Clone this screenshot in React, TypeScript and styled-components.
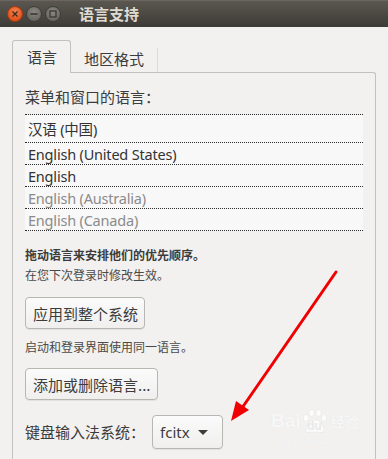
import React from "react";
import styled, { createGlobalStyle } from "styled-components";

const Global = createGlobalStyle`
  html, body { margin: 0; padding: 0; }
  body {
    width: 388px; height: 459px; overflow: hidden;
    background: #f2f1f0;
    font-family: "Noto Sans", "Noto Sans CJK SC", sans-serif;
    color: #3c3c3c;
  }
`;

const Window = styled.div`
  position: relative;
  width: 388px;
  height: 459px;
  background: #f2f1f0;
  overflow: hidden;
`;

const TitleBar = styled.div`
  height: 27px;
  display: flex;
  align-items: center;
  padding-left: 7px;
  background: linear-gradient(#5b5750 0%, #4f4c46 40%, #3d3b37 100%);
  border-top: 1px solid #6a665f;
  box-sizing: border-box;
`;

const WinBtn = styled.div<{ $close?: boolean }>`
  width: 16px;
  height: 16px;
  border-radius: 50%;
  box-sizing: border-box;
  margin-right: 3px;
  display: flex;
  align-items: center;
  justify-content: center;
  background: ${(p) =>
    p.$close
      ? "radial-gradient(circle at 50% 35%, #f4834f, #e0541c 70%, #c84311)"
      : "radial-gradient(circle at 50% 35%, #8a8680, #6c6964 70%, #5a5853)"};
  border: 1px solid ${(p) => (p.$close ? "#a8380f" : "#3f3d39")};
`;

const Title = styled.div`
  margin-left: 15px;
  font-family: "Noto Sans CJK SC", sans-serif;
  font-size: 15px;
  font-weight: 700;
  color: #dfdbd2;
  line-height: 20px;
`;

const Body = styled.div`
  padding: 13px 12px 0 12px;
`;

const Tabs = styled.div`
  display: flex;
  align-items: flex-start;
  height: 32px;
  position: relative;
  z-index: 1;
`;

const Tab = styled.div<{ $active?: boolean }>`
  box-sizing: border-box;
  font-family: "Noto Sans CJK SC", sans-serif;
  font-size: 15px;
  line-height: 20px;
  color: #3c3c3c;
  background: #f2f1f0;
  ${(p) =>
    p.$active
      ? `
    height: 33px;
    padding: 6px 13px 0 14px;
    border: 1px solid #c3c1bc;
    border-bottom: none;
    border-radius: 3px 3px 0 0;
  `
      : `
    height: 24px;
    margin-top: 8px;
    padding: 1px 13px 0 13px;
    border-right: 1px solid #dedcd8;
  `}
`;

const Frame = styled.div`
  box-sizing: border-box;
  border: 1px solid #c3c1bc;
  border-bottom: none;
  border-radius: 0 3px 0 0;
  height: 400px;
  padding: 14px 12px 0 12px;
`;

const Label = styled.div`
  font-family: "Noto Sans CJK SC", sans-serif;
  font-size: 15px;
  line-height: 20px;
  color: #3c3c3c;
`;

const List = styled.div`
  margin-top: 7px;
  border-top: 1px dotted #2a2a2a;
`;

const Row = styled.div<{ $muted?: boolean; $tall?: boolean }>`
  height: ${(p) => (p.$tall ? "27px" : "21px")};
  display: flex;
  align-items: center;
  padding-left: 3px;
  background: #f8f8f8;
  border-bottom: 1px dotted #2a2a2a;
  font-family: "Noto Sans", "Noto Sans CJK SC", sans-serif;
  font-size: 14.5px;
  color: ${(p) => (p.$muted ? "#8b8b8b" : "#333333")};
  letter-spacing: -0.2px;
`;

const Hint = styled.div<{ $bold?: boolean; $gap?: number }>`
  margin-top: ${(p) => p.$gap ?? 0}px;
  font-family: "Noto Sans CJK SC", sans-serif;
  font-size: 12px;
  line-height: 20px;
  font-weight: ${(p) => (p.$bold ? 700 : 400)};
  color: ${(p) => (p.$bold ? "#3c3c3c" : "#4a4a4a")};
`;

const Button = styled.div<{ $gap?: number }>`
  display: inline-flex;
  align-items: center;
  box-sizing: border-box;
  margin-top: ${(p) => p.$gap ?? 0}px;
  height: 32px;
  padding: 0 6px 0 7px;
  border: 1px solid #b8b6b1;
  border-radius: 4px;
  background: linear-gradient(#fbfbfb, #f0efee);
  box-shadow: 0 1px 0 rgba(0, 0, 0, 0.06);
  font-family: "Noto Sans CJK SC", sans-serif;
  font-size: 15px;
  color: #3c3c3c;
`;

const KbdRow = styled.div`
  margin-top: 15px;
  display: flex;
  align-items: center;
`;

const Combo = styled.div`
  margin-left: 7px;
  display: inline-flex;
  align-items: center;
  box-sizing: border-box;
  height: 34px;
  padding: 0 14px 0 7px;
  border: 1px solid #b8b6b1;
  border-radius: 4px;
  background: linear-gradient(#fbfbfb, #f0efee);
  box-shadow: 0 1px 0 rgba(0, 0, 0, 0.06);
  font-family: "Noto Sans", sans-serif;
  font-size: 15px;
  color: #3c3c3c;
`;

const Caret = styled.span`
  margin-left: 8px;
  width: 0;
  height: 0;
  border-left: 5px solid transparent;
  border-right: 5px solid transparent;
  border-top: 5px solid #3c3c3c;
`;

const Overlay = styled.svg`
  position: absolute;
  left: 0;
  top: 0;
  pointer-events: none;
`;

const Watermark = styled.div`
  position: absolute;
  left: 271px;
  top: 409px;
  display: flex;
  flex-direction: column;
  align-items: flex-start;
  color: rgba(255, 255, 255, 0.75);
  text-shadow: 0 0 1px rgba(0, 0, 0, 0.08);
  pointer-events: none;
`;

const WmTop = styled.div`
  display: flex;
  align-items: center;
  font-family: "Liberation Sans", sans-serif;
  font-weight: 700;
  font-size: 19px;
  line-height: 24px;
`;

const Paw = styled.span`
  position: relative;
  display: inline-flex;
  align-items: flex-end;
  justify-content: center;
  width: 26px;
  height: 24px;
  margin: 0 1px;
`;

const PawText = styled.span`
  position: relative;
  font-size: 12px;
  line-height: 14px;
  color: rgba(235, 235, 235, 0.8);
`;

const WmCn = styled.span`
  font-family: "Noto Sans CJK SC", sans-serif;
  font-size: 14px;
  margin-left: 2px;
`;

const WmUrl = styled.div`
  font-family: "Liberation Sans", sans-serif;
  font-size: 9px;
  line-height: 11px;
  margin-top: 2px;
  letter-spacing: 0.4px;
`;

export default function App() {
  const paw = "rgba(255,255,255,0.8)";
  const edge = "rgba(0,0,0,0.07)";
  return (
    <Window>
      <Global />
      <TitleBar>
        <WinBtn $close>
          <svg width="8" height="8" viewBox="0 0 8 8">
            <path d="M1.5 1.5 L6.5 6.5 M6.5 1.5 L1.5 6.5" stroke="#3c2a22" strokeWidth="1.4" />
          </svg>
        </WinBtn>
        <WinBtn>
          <svg width="10" height="10" viewBox="0 0 10 10">
            <path d="M1.5 5 H8.5" stroke="#3a3935" strokeWidth="1.6" />
          </svg>
        </WinBtn>
        <WinBtn>
          <svg width="10" height="10" viewBox="0 0 10 10">
            <rect x="2" y="2" width="6" height="6" fill="none" stroke="#3a3935" strokeWidth="1.3" />
          </svg>
        </WinBtn>
        <Title>语言支持</Title>
      </TitleBar>
      <Body>
        <Tabs>
          <Tab $active>语言</Tab>
          <Tab>地区格式</Tab>
        </Tabs>
        <Frame>
          <Label>菜单和窗口的语言：</Label>
          <List>
            <Row $tall>汉语 (中国)</Row>
            <Row>English (United States)</Row>
            <Row>English</Row>
            <Row $muted>English (Australia)</Row>
            <Row $muted>English (Canada)</Row>
          </List>
          <Hint $bold $gap={14}>拖动语言来安排他们的优先顺序。</Hint>
          <Hint>在您下次登录时修改生效。</Hint>
          <div>
            <Button $gap={12}>应用到整个系统</Button>
          </div>
          <Hint $gap={8}>启动和登录界面使用同一语言。</Hint>
          <div>
            <Button $gap={11}>添加或删除语言...</Button>
          </div>
          <KbdRow>
            <Label>键盘输入法系统：</Label>
            <Combo>
              fcitx
              <Caret />
            </Combo>
          </KbdRow>
        </Frame>
      </Body>
      <Watermark>
        <WmTop>
          Bai
          <Paw>
            <svg width="26" height="24" viewBox="0 0 26 24" style={{ position: "absolute", left: 0, top: 0 }}>
              <ellipse cx="4" cy="9" rx="2.6" ry="3.4" fill={paw} stroke={edge} strokeWidth="0.6" />
              <ellipse cx="9.5" cy="4" rx="2.6" ry="3.2" fill={paw} stroke={edge} strokeWidth="0.6" />
              <ellipse cx="16.5" cy="4" rx="2.6" ry="3.2" fill={paw} stroke={edge} strokeWidth="0.6" />
              <ellipse cx="22" cy="9" rx="2.6" ry="3.4" fill={paw} stroke={edge} strokeWidth="0.6" />
              <path d="M4 23 C4 15 9 11 13 11 C17 11 22 15 22 23 Z" fill={paw} stroke={edge} strokeWidth="0.6" />
            </svg>
            <PawText>du</PawText>
          </Paw>
          <WmCn>经验</WmCn>
        </WmTop>
        <WmUrl>jingyan.baidu.com</WmUrl>
      </Watermark>
      <Overlay width="388" height="459" viewBox="0 0 388 459">
        <line x1="336" y1="272" x2="242" y2="408" stroke="#f00000" strokeWidth="3" strokeLinecap="round" />
        <polygon points="231,421 236,401 249,410" fill="#f00000" />
      </Overlay>
    </Window>
  );
}
